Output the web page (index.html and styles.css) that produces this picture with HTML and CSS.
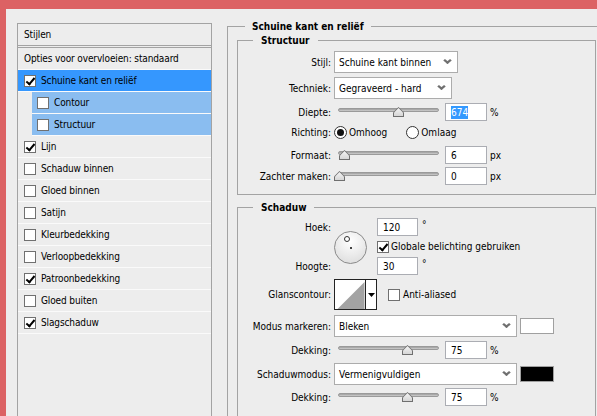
FILE: index.html
```html
<!DOCTYPE html>
<html lang="nl">
<head>
<meta charset="utf-8">
<title>Laagstijl</title>
<link rel="stylesheet" href="styles.css">
</head>
<body>
<div class="topbar"></div>
<div class="main">
  <div class="strip"></div>
  <div class="styles-panel">
    <div class="row head">Stijlen</div>
    <div class="row opts">Opties voor overvloeien: standaard</div>
    <div class="row active"><span class="cb checked"></span>Schuine kant en reliëf</div>
    <div class="row sub"><span class="cb"></span>Contour</div>
    <div class="row sub"><span class="cb"></span>Structuur</div>
    <div class="row"><span class="cb checked"></span>Lijn</div>
    <div class="row"><span class="cb"></span>Schaduw binnen</div>
    <div class="row"><span class="cb"></span>Gloed binnen</div>
    <div class="row"><span class="cb"></span>Satijn</div>
    <div class="row"><span class="cb"></span>Kleurbedekking</div>
    <div class="row"><span class="cb"></span>Verloopbedekking</div>
    <div class="row"><span class="cb checked"></span>Patroonbedekking</div>
    <div class="row"><span class="cb"></span>Gloed buiten</div>
    <div class="row"><span class="cb checked"></span>Slagschaduw</div>
  </div>
  <div class="settings">
    <fieldset class="outer">
      <legend class="legend-outer">Schuine kant en reliëf</legend>
      <fieldset class="group structuur">
        <legend>Structuur</legend>
        <div class="frow r22">
          <label class="lbl">Stijl:</label>
          <div class="select w124"><span>Schuine kant binnen</span><i class="chev"></i></div>
        </div>
        <div class="frow r22 mt4">
          <label class="lbl">Techniek:</label>
          <div class="select w118"><span>Gegraveerd - hard</span><i class="chev"></i></div>
        </div>
        <div class="frow r18 mt4">
          <label class="lbl">Diepte:</label>
          <div class="slider"><div class="track"></div><div class="thumb" style="left:59px"></div></div>
          <div class="num"><span class="sel">674</span></div>
          <span class="unit">%</span>
        </div>
        <div class="frow r22">
          <label class="lbl">Richting:</label>
          <span class="radio on"></span><span class="rtext">Omhoog</span>
          <span class="radio second"></span><span class="rtext">Omlaag</span>
        </div>
        <div class="frow r18 mt3">
          <label class="lbl">Formaat:</label>
          <div class="slider"><div class="track"></div><div class="thumb" style="left:5px"></div></div>
          <div class="num">6</div>
          <span class="unit">px</span>
        </div>
        <div class="frow r18 mt3">
          <label class="lbl">Zachter maken:</label>
          <div class="slider"><div class="track"></div><div class="thumb" style="left:0px"></div></div>
          <div class="num">0</div>
          <span class="unit">px</span>
        </div>
      </fieldset>
      <fieldset class="group schaduw">
        <legend>Schaduw</legend>
        <div class="angle-grid">
          <label class="lbl hoek">Hoek:</label>
          <div class="dial"><span class="marker"></span><span class="center"></span></div>
          <div class="inrow r1"><div class="num small">120</div><span class="deg">°</span></div>
          <div class="inrow r2"><span class="cb checked"></span><span class="cbtext">Globale belichting gebruiken</span></div>
          <label class="lbl hoogte">Hoogte:</label>
          <div class="inrow r3"><div class="num small">30</div><span class="deg">°</span></div>
        </div>
        <div class="frow r31 mt4">
          <label class="lbl">Glanscontour:</label>
          <div class="contour">
            <svg class="curve" width="29" height="29" viewBox="0 0 29 29"><polygon points="2,29 29,2 29,29" fill="#a3a3a3"/></svg>
            <span class="drop"><svg width="7" height="4" viewBox="0 0 7 4"><polygon points="0,0 7,0 3.5,4" fill="#000"/></svg></span>
          </div>
          <span class="cb aa"></span><span class="cbtext">Anti-aliased</span>
        </div>
        <div class="frow r22 mt5">
          <label class="lbl">Modus markeren:</label>
          <div class="select w183"><span>Bleken</span><i class="chev"></i></div>
          <span class="swatch white"></span>
        </div>
        <div class="frow r18 mt4">
          <label class="lbl">Dekking:</label>
          <div class="slider"><div class="track"></div><div class="thumb" style="left:68px"></div></div>
          <div class="num">75</div>
          <span class="unit">%</span>
        </div>
        <div class="frow r22 mt4">
          <label class="lbl">Schaduwmodus:</label>
          <div class="select w183"><span>Vermenigvuldigen</span><i class="chev"></i></div>
          <span class="swatch black"></span>
        </div>
        <div class="frow r18 mt3">
          <label class="lbl">Dekking:</label>
          <div class="slider"><div class="track"></div><div class="thumb" style="left:68px"></div></div>
          <div class="num">75</div>
          <span class="unit">%</span>
        </div>
      </fieldset>
    </fieldset>
  </div>
</div>
</body>
</html>
```
FILE: styles.css
```css
* { box-sizing: border-box; }
html, body { margin: 0; padding: 0; }
body {
  width: 597px;
  height: 416px;
  overflow: hidden;
  background: #ededed;
  font-family: "DejaVu Sans Condensed", "DejaVu Sans", sans-serif;
  font-stretch: condensed;
  font-size: 10px;
  color: #000;
  display: flex;
  flex-direction: column;
}
.topbar { height: 9px; background: #dc6264; flex: none; }
.main { flex: 1; display: flex; min-height: 0; }
.strip { width: 6px; background: #dc6264; flex: none; }

/* left list */
.styles-panel {
  width: 195px;
  margin: 14px 0 0 11px;
  border: 1px solid #a3a3a3;
  border-bottom: none;
  flex: none;
}
.row {
  height: 22px;
  border-bottom: 1px solid #fafafa;
  display: flex;
  align-items: center;
  padding-left: 6px;
  white-space: nowrap;
  letter-spacing: -0.12px;
}
.row.head { border-bottom: 1px solid #a3a3a3; height: 22px; }
.row.opts { border-top: 1px solid #a3a3a3; margin-top: 1px; height: 23px; padding-left: 6px; }
.row.active { background: #3597fe; }
.row.sub { background: #8abdf0; margin-left: 14px; padding-left: 5px; }
.cb {
  width: 12px; height: 12px;
  border: 1px solid #707070;
  background: #fff;
  margin-right: 5px;
  flex: none;
  position: relative;
}
.cb.checked::after {
  content: "";
  position: absolute;
  left: 3px; top: 0px;
  width: 3px; height: 7px;
  border: solid #000;
  border-width: 0 2px 2px 0;
  transform: rotate(40deg);
}

/* right */
.settings { margin-left: 15px; flex: none; width: 380px; overflow: hidden; }
fieldset { margin: 0; min-width: 0; }
.outer {
  border: 1px solid #a3a3a3;
  border-bottom: none;
  padding: 0 0 0 9px;
  margin-top: 11px;
  width: 400px;
  height: 420px;
}
legend { font-weight: bold; padding: 0 8px; line-height: 13px; }
.legend-outer { margin-left: 8px; padding: 0 7px 0 7px; }
.group {
  width: 359px;
  border: 1px solid #a3a3a3;
  padding: 0 0 0 0;
}
.group legend { margin-left: 15px; }
.structuur { padding-top: 4px; height: 161px; margin-top: 1px; }
.schaduw { margin-top: 6px; padding-top: 4px; height: 216px; }

.frow { display: flex; align-items: center; white-space: nowrap; }
.r22 { height: 22px; }
.r18 { height: 18px; }
.r31 { height: 31px; }
.mt3 { margin-top: 3px; }
.mt4 { margin-top: 4px; }
.mt5 { margin-top: 5px; }
.lbl { width: 93px; text-align: right; margin-right: 3px; flex: none; }

.select {
  height: 22px;
  background: #fff;
  border: 1px solid #acacac;
  display: flex;
  align-items: center;
  padding-left: 4px;
  position: relative;
}
.w124 { width: 124px; }
.w118 { width: 118px; }
.w183 { width: 183px; }
.chev {
  position: absolute;
  right: 7px; top: 6px;
  width: 5px; height: 5px;
  border: solid #707070;
  border-width: 0 2px 2px 0;
  transform: scaleX(1.2) rotate(45deg);
}

.slider { width: 108px; height: 18px; position: relative; flex: none; margin-right: 3px; }
.track {
  position: absolute; left: 4px; right: 3px; top: 5px; height: 4px;
  border-radius: 2px;
  background: linear-gradient(#9c9c9c, #cfcfcf);
  border: 1px solid #9a9a9a;
}
.thumb {
  position: absolute; top: 4px;
  width: 11px; height: 10px;
  background: #6f6f6f;
  clip-path: polygon(50% 0, 100% 55%, 100% 100%, 0 100%, 0 55%);
}
.thumb::after {
  content: "";
  position: absolute; left: 1px; top: 1px; right: 1px; bottom: 1px;
  background: linear-gradient(#f4f4f4, #d6d6d6);
  clip-path: polygon(50% 0, 100% 55%, 100% 100%, 0 100%, 0 55%);
}
.num {
  width: 42px; height: 18px;
  background: #fff;
  border: 1px solid #abadb3;
  padding-left: 5px;
  display: flex; align-items: center;
  flex: none;
}
.num.small { width: 41px; }
.sel { background: #3399ff; color: #fff; padding: 1px 0; }
.unit { margin-left: 3px; }
.deg { margin-left: 4px; align-self: flex-start; margin-top: 1px; font-size: 10px; }

.radio {
  width: 13px; height: 13px; border-radius: 50%;
  border: 1px solid #333;
  background: #fff;
  position: relative; flex: none;
  margin-right: 2px;
}
.radio.on::after {
  content: ""; position: absolute; left: 2px; top: 2px;
  width: 7px; height: 7px; border-radius: 50%; background: #111;
}
.radio.second { margin-left: 19px; }

.angle-grid {
  display: grid;
  grid-template-columns: 96px 34px auto;
  grid-template-rows: 18px 21px 18px;
  margin-top: 0;
}
.angle-grid .lbl { display: flex; align-items: center; justify-content: flex-end; }
.hoek { grid-column: 1; grid-row: 1; }
.hoogte { grid-column: 1; grid-row: 3; }
.dial {
  grid-column: 2; grid-row: 1 / 4;
  align-self: center;
  width: 33px; height: 33px; border-radius: 50%;
  border: 1px solid #8a8a8a;
  background: radial-gradient(circle at 50% 30%, #ffffff, #e4e4e4 70%, #d8d8d8);
  position: relative;
  margin-top: 2px;
}
.marker {
  position: absolute; left: 9px; top: 4px;
  width: 6px; height: 6px; border-radius: 50%;
  border: 1px solid #333; background: #fff;
}
.center {
  position: absolute; left: 15px; top: 15px;
  width: 2px; height: 2px; background: #444;
}
.inrow { grid-column: 3; display: flex; align-items: center; padding-left: 9px; }
.inrow.r1 { grid-row: 1; }
.inrow.r2 { grid-row: 2; }
.inrow.r3 { grid-row: 3; }
.inrow.r2 .cb { margin-left: 0; margin-right: 2px; }
.cbtext { white-space: nowrap; }

.contour {
  width: 43px; height: 31px;
  border: 1px solid #222;
  display: flex; background: #fff;
  flex: none;
}
.curve { display: block; margin: 0; width: 30px; height: 29px; }
.drop {
  width: 11px; border-left: 1px solid #222;
  display: flex; align-items: center; justify-content: center;
}
.cb.aa { margin-left: 11px; margin-right: 3px; }

.swatch { width: 34px; height: 16px; border: 1px solid #a0a0a0; margin-left: 3px; flex: none; }
.swatch.white { background: #fff; }
.swatch.black { background: #000; }
```
